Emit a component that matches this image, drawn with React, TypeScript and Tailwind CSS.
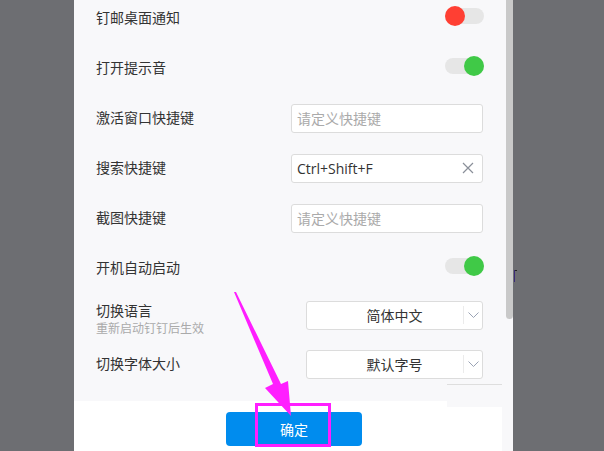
import React from "react";

const font = { fontFamily: '"Open Sans", "Noto Sans CJK SC", sans-serif' };

function Toggle({ on }: { on: boolean }) {
  return (
    <div className="relative w-[39px] h-[16px] rounded-full bg-[#e6e6e6] -mt-[4px]">
      {on ? (
        <div className="absolute right-[0px] top-[-2px] w-[20px] h-[20px] rounded-full bg-[#40c947]" />
      ) : (
        <div className="absolute left-[0px] top-[-2px] w-[20px] h-[20px] rounded-full bg-[#ff3f33]" />
      )}
    </div>
  );
}

function Input({ value, placeholder }: { value?: string; placeholder: string }) {
  return (
    <div className="w-[192px] h-[29px] bg-white border border-[#dcdcdc] rounded-[3px] flex items-center pl-[5px] pr-[8px]">
      {value ? (
        <>
          <span className="flex-1 text-[14px] text-[#333]">{value}</span>
          <svg width="12" height="12" viewBox="0 0 12 12">
            <path d="M1 1 L11 11 M11 1 L1 11" stroke="#8a8f99" strokeWidth="1.2" fill="none" />
          </svg>
        </>
      ) : (
        <span className="text-[14px] text-[#aaaaaa]">{placeholder}</span>
      )}
    </div>
  );
}

function Select({ value }: { value: string }) {
  return (
    <div className="w-[177px] h-[29px] bg-white border border-[#dcdcdc] rounded-[3px] flex items-center">
      <div className="flex-1 flex justify-center pl-[19px] text-[14px] text-[#333]">{value}</div>
      <div className="w-[1px] h-[18px] bg-[#ebebeb]" />
      <div className="w-[18px] flex justify-center">
        <svg width="11" height="6" viewBox="0 0 11 6">
          <path d="M0.5 0.5 L5.5 5.5 L10.5 0.5" stroke="#9aa3b5" strokeWidth="1" fill="none" />
        </svg>
      </div>
    </div>
  );
}

function Row({ label, children }: { label: string; children: React.ReactNode }) {
  return (
    <div className="h-[50px] flex items-center justify-between pl-[22px] pr-[22px]">
      <span className="text-[14px] text-[#333] leading-[18px]">{label}</span>
      {children}
    </div>
  );
}

export default function App() {
  return (
    <div className="relative w-[604px] h-[451px] flex overflow-hidden bg-[#6d6e72]" style={font}>
      <div className="w-[74px] h-full bg-[#6d6e72]" />
      <div className="w-[439px] h-full flex flex-col">
        <div className="relative h-[401px] flex bg-[#f8f8fa]">
          <div className="w-[432px] h-full overflow-hidden">
            <div className="-mt-[7px]">
              <Row label="钉邮桌面通知">
                <Toggle on={false} />
              </Row>
              <Row label="打开提示音">
                <Toggle on={true} />
              </Row>
              <div className="pr-[1px]">
                <Row label="激活窗口快捷键">
                  <Input placeholder="请定义快捷键" />
                </Row>
                <Row label="搜索快捷键">
                  <Input value="Ctrl+Shift+F" placeholder="请定义快捷键" />
                </Row>
                <Row label="截图快捷键">
                  <Input placeholder="请定义快捷键" />
                </Row>
              </div>
              <Row label="开机自动启动">
                <Toggle on={true} />
              </Row>
              <div className="h-[46px] flex items-center justify-between pl-[22px] pr-[23px]">
                <div className="flex flex-col pt-[7px]">
                  <span className="text-[14px] text-[#333] leading-[18px]">切换语言</span>
                  <span className="text-[12px] text-[#aaaaaa] leading-[18px]">重新启动钉钉后生效</span>
                </div>
                <div className="-mt-[2px]">
                  <Select value="简体中文" />
                </div>
              </div>
              <div className="h-[50px] flex items-center justify-between pl-[22px] pr-[23px]">
                <span className="text-[14px] text-[#333] leading-[18px]">切换字体大小</span>
                <Select value="默认字号" />
              </div>
            </div>
            <div className="absolute left-[373px] top-[384px] w-[55px] h-[1px] bg-[#dedede]" />
          </div>
          <div className="w-[7px] h-full">
            <div className="w-[7px] h-[319px] bg-[#c9c9c9] rounded-b-[4px]" />
          </div>
        </div>
        <div className="h-[50px] flex">
          <div className="w-[373px] h-full bg-white pl-[152px] pt-[11px]">
            <button className="w-[136px] h-[34px] rounded-[4px] bg-[#008cee] text-white text-[14px] flex items-center justify-center">
              确定
            </button>
          </div>
          <div className="w-[55px] h-full flex flex-col">
            <div className="h-[6px] bg-[#f8f8fa]" />
            <div className="flex-1 bg-white" />
          </div>
          <div className="flex-1 h-full bg-[#f8f8fa]" />
        </div>
      </div>
      <div className="flex-1 h-full bg-[#6d6e72]" />

      {/* tiny mark behind overlay */}
      <div className="absolute left-[514px] top-[270px] w-[3px] h-[1px] bg-[#222]" />
      <div className="absolute left-[514px] top-[270px] w-[1px] h-[12px] bg-[#3b2a78]" />

      {/* annotation: magenta box and arrow */}
      <div className="absolute left-[255px] top-[403px] w-[76px] h-[44px] border-[3px] border-[#ff1eff]" />
      <svg className="absolute left-0 top-0" width="604" height="451" viewBox="0 0 604 451">
        <polygon points="234,292 236,292 281,384 288,381 291,416 265,388 273,384" fill="#ff1eff" />
      </svg>
    </div>
  );
}
